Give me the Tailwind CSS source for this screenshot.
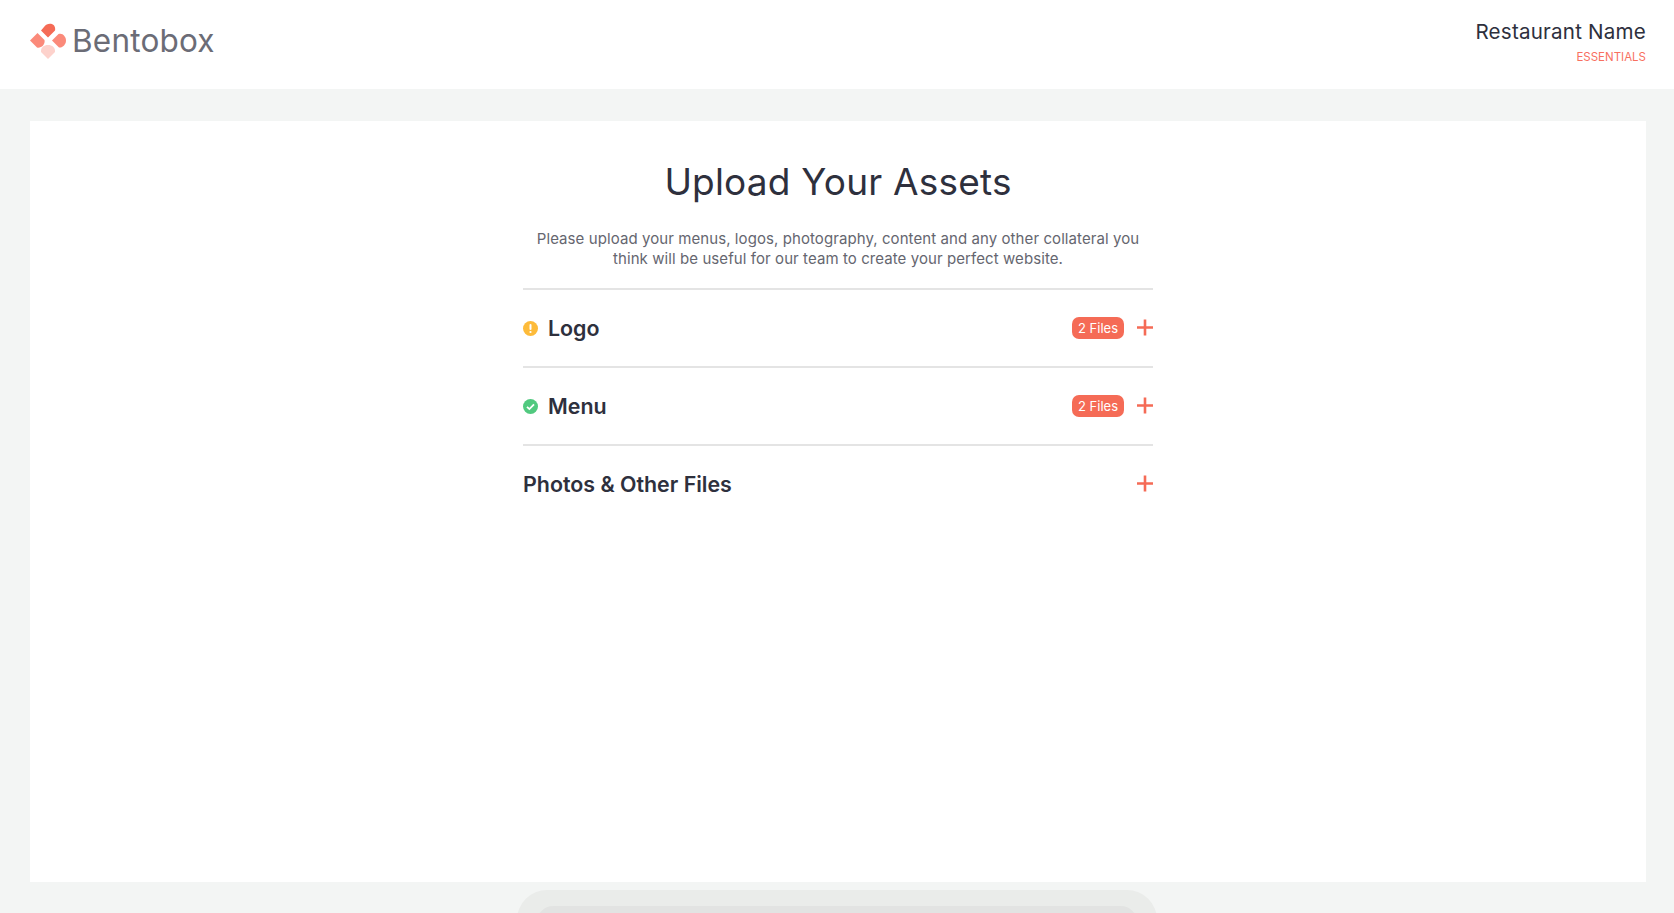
<!DOCTYPE html>
<html><head><meta charset="utf-8"><script src="https://cdn.jsdelivr.net/npm/@tailwindcss/browser@4"></script></head>
<body class="m-0">
<div class="w-[1674px] h-[913px] overflow-hidden bg-[#f3f5f4] font-['Inter',sans-serif] text-[#2e303d] flex flex-col">
  <header class="h-[89px] shrink-0 bg-white flex justify-between pl-[30px] pr-[28px]">
    <div class="flex items-center gap-[5px] pb-[8px]">
      <svg width="37" height="37" viewBox="0 0 37 37">
        <path d="M18 15.5 L11 8.5 L14 5 C18 -0.5 26.5 1.5 25 8.5 Z" fill="#f56b56"/>
        <path d="M0 18.5 L7.5 11 L14.5 18 C15.5 23 10.5 26.5 7 25.5 Z" fill="#fb8a7a"/>
        <path d="M22 18.5 L28.5 12 C32.5 10.5 36 14.5 36 18.5 C36 22.5 32.5 26 29 25.5 Z" fill="#fb8a7a"/>
        <path d="M18 37 L11 30 C10.5 25.5 14 23 18 23 C22 23 25.5 25.5 25 30 Z" fill="#fdd2cc"/>
      </svg>
      <span class="text-[31.5px] leading-none text-[#6b6c76] tracking-[0.2px]">Bentobox</span>
    </div>
    <div class="text-right pt-[19px]">
      <div class="text-[20.6px] leading-[26px] tracking-[0.2px]">Restaurant Name</div>
      <div class="text-[11.5px] leading-[16px] mt-[4px] text-[#f8705f]">ESSENTIALS</div>
    </div>
  </header>
  <div class="relative flex-1 pl-[30px] pr-[28px] pt-[32px]">
    <main class="h-[761px] bg-white flex flex-col items-center pt-[37px]">
      <h1 class="text-[37px] leading-[48px] font-normal tracking-[0.2px]">Upload Your Assets</h1>
      <p class="mt-[23px] w-[630px] text-center text-[15px] leading-[20px] text-[#65666f] tracking-[0.08px]">Please upload your menus, logos, photography, content and any other collateral you<br>think will be useful for our team to create your perfect website.</p>
      <div class="w-[630px] mt-[19px]">
        <div class="h-[78px] border-t-2 border-[#e4e4e4] flex items-center justify-between">
          <div class="flex items-center gap-[10px]">
            <svg width="15" height="15" viewBox="0 0 15 15"><circle cx="7.5" cy="7.5" r="7.5" fill="#fdbb3a"/><rect x="6.5" y="3" width="2" height="6" rx="1" fill="#fff"/><circle cx="7.5" cy="11" r="1.1" fill="#fff"/></svg>
            <span class="text-[21.4px] leading-none font-semibold pt-[1px]">Logo</span>
          </div>
          <div class="flex items-center gap-[12px]">
            <span class="w-[52px] h-[22px] rounded-[7px] bg-[#f56b56] text-white text-[13px] pt-[1px] flex items-center justify-center">2 Files</span>
            <svg class="mb-[2px]" width="17" height="17" viewBox="0 0 17 17"><path d="M9 0.5v16M1 8.5h16" stroke="#f56b56" stroke-width="2.6"/></svg>
          </div>
        </div>
        <div class="h-[78px] border-t-2 border-[#e4e4e4] flex items-center justify-between">
          <div class="flex items-center gap-[10px]">
            <svg width="15" height="15" viewBox="0 0 15 15"><circle cx="7.5" cy="7.5" r="7.5" fill="#51c97f"/><path d="M4 7.8l2.4 2.3L11 5.4" fill="none" stroke="#fff" stroke-width="1.8"/></svg>
            <span class="text-[21.4px] leading-none font-semibold pt-[1px]">Menu</span>
          </div>
          <div class="flex items-center gap-[12px]">
            <span class="w-[52px] h-[22px] rounded-[7px] bg-[#f56b56] text-white text-[13px] pt-[1px] flex items-center justify-center">2 Files</span>
            <svg class="mb-[2px]" width="17" height="17" viewBox="0 0 17 17"><path d="M9 0.5v16M1 8.5h16" stroke="#f56b56" stroke-width="2.6"/></svg>
          </div>
        </div>
        <div class="h-[78px] border-t-2 border-[#e4e4e4] flex items-center justify-between">
          <span class="text-[21.4px] leading-none font-semibold pt-[1px]">Photos &amp; Other Files</span>
          <svg class="mb-[2px]" width="17" height="17" viewBox="0 0 17 17"><path d="M9 0.5v16M1 8.5h16" stroke="#f56b56" stroke-width="2.6"/></svg>
        </div>
      </div>
    </main>
    <div class="absolute left-[517px] top-[801px] w-[640px] h-[60px] rounded-t-[30px] bg-[#eaecea] flex justify-center pt-[16px]">
      <div class="w-[600px] h-[40px] rounded-t-[16px] bg-[#e2e3e2]"></div>
    </div>
  </div>
</div>
</body></html>
